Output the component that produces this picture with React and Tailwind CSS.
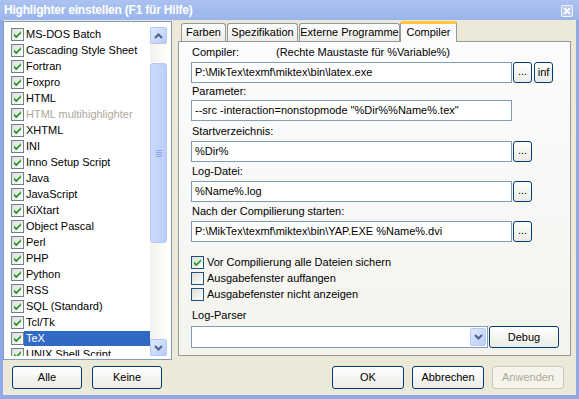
import React from "react";

const languages = [
  "MS-DOS Batch",
  "Cascading Style Sheet",
  "Fortran",
  "Foxpro",
  "HTML",
  "HTML multihighlighter",
  "XHTML",
  "INI",
  "Inno Setup Script",
  "Java",
  "JavaScript",
  "KiXtart",
  "Object Pascal",
  "Perl",
  "PHP",
  "Python",
  "RSS",
  "SQL (Standard)",
  "Tcl/Tk",
  "TeX",
  "UNIX Shell Script",
];

const Check = () => (
  <svg width="11" height="11" viewBox="0 0 11 11">
    <path d="M2 4.5 L4.3 6.8 L9 2.1 L9 4.6 L4.3 9.3 L2 7 Z" fill="#21A121" />
  </svg>
);

const CheckBox = ({ checked, dark }) => (
  <div
    className={`w-[13px] h-[13px] shrink-0 border flex items-center justify-center bg-linear-to-br from-[#DCDCD7] to-white ${
      dark ? "border-[#1C5180]" : "border-[#72818F]"
    }`}
  >
    {checked && <Check />}
  </div>
);

const Chevron = ({ down }) => (
  <svg width="9" height="6" viewBox="0 0 9 6">
    <polyline
      points={down ? "1,1 4.5,4.5 8,1" : "1,5 4.5,1.5 8,5"}
      fill="none"
      stroke="#4D6185"
      strokeWidth="2"
    />
  </svg>
);

const XpButton = ({ children, className = "", disabled }) => (
  <div
    className={`flex items-center justify-center rounded-[3px] border ${
      disabled
        ? "border-[#C9C7BA] bg-[#F5F4EA] text-[#ACA899]"
        : "border-[#003C74] bg-linear-to-b from-white to-[#ECEBE6]"
    } ${className}`}
  >
    {children}
  </div>
);

const Field = ({ value, w = "w-[321px]" }) => (
  <div className={`${w} h-[21px] border border-[#7F9DB9] bg-white flex items-center pl-[3px] whitespace-nowrap overflow-hidden`}>
    {value}
  </div>
);

const Dots = () => <XpButton className="w-[19px] h-[21px] ml-[1px] pb-[3px]">...</XpButton>;

export default function App() {
  return (
    <div className="w-[579px] h-[399px] bg-[#8EA8E8] flex flex-col overflow-hidden font-['Liberation_Sans',Arial,sans-serif] text-[11px] text-black">
      {/* title bar */}
      <div className="relative h-[20px] shrink-0 flex items-center pl-[4px] bg-linear-to-b from-[#ABC2F1] to-[#9BB5EC]">
        <span className="font-bold text-[12px] text-white tracking-[-0.2px]">Highlighter einstellen (F1 für Hilfe)</span>
        <div className="absolute right-[6px] top-[5px] w-[12px] h-[12px] rounded-[2px] border border-white/80 bg-[#B6C6EE] flex items-center justify-center">
          <svg width="8" height="8" viewBox="0 0 8 8">
            <path d="M1 1 L7 7 M7 1 L1 7" stroke="white" strokeWidth="1.8" />
          </svg>
        </div>
      </div>

      {/* body */}
      <div className="flex-1 mx-[3px] mb-[4px] bg-[#ECE9D8] flex flex-col">
        <div className="flex pt-[1px]">
          {/* language list */}
          <div className="w-[169px] h-[339px] border border-[#7F9DB9] bg-white flex pt-[4px] pl-[4px] pr-[4px] pb-[3px]">
            <div className="flex-1 flex flex-col overflow-hidden">
              {languages.map((name) => {
                const sel = name === "TeX";
                const dis = name === "HTML multihighlighter";
                return (
                  <div key={name} className="h-[16px] shrink-0 flex items-center pl-[3px]">
                    <CheckBox checked />
                    <span
                      className={`ml-[0px] h-[15px] flex-1 flex items-center pl-[2px] whitespace-nowrap ${
                        sel ? "bg-[#316AC5] text-white" : dis ? "text-[#ACA899]" : ""
                      }`}
                    >
                      {name}
                    </span>
                  </div>
                );
              })}
            </div>
            {/* scrollbar */}
            <div className="w-[17px] mt-[1px] flex flex-col bg-linear-to-r from-[#F3F1EC] to-[#FEFEFB]">
              <div className="h-[17px] rounded-[2px] border border-[#B4C8F6] bg-linear-to-br from-[#E0E9FD] to-[#BACCF7] flex items-center justify-center">
                <Chevron />
              </div>
              <div className="h-[19px]" />
              <div className="h-[180px] rounded-[3px] border border-[#B4C8F6] bg-linear-to-r from-[#CBDAFC] to-[#BCCFFA] flex flex-col items-center justify-center gap-[1px]">
                <div className="w-[6px] h-[1px] bg-[#8BA7E8]" />
                <div className="w-[6px] h-[1px] bg-[#8BA7E8]" />
                <div className="w-[6px] h-[1px] bg-[#8BA7E8]" />
                <div className="w-[6px] h-[1px] bg-[#8BA7E8]" />
              </div>
              <div className="flex-1" />
              <div className="h-[17px] rounded-[2px] border border-[#B4C8F6] bg-linear-to-br from-[#E0E9FD] to-[#BACCF7] flex items-center justify-center">
                <Chevron down />
              </div>
            </div>
          </div>

          {/* tab control */}
          <div className="ml-[6px] w-[393px] flex flex-col">
            <div className="h-[20px] flex items-end pl-[3px]">
              <div className="w-[45px] h-[18px] border border-b-0 border-[#919B9C] rounded-t-[3px] bg-linear-to-b from-white to-[#ECEBE6] flex items-center justify-center">
                Farben
              </div>
              <div className="ml-[1px] w-[71px] h-[18px] border border-b-0 border-[#919B9C] rounded-t-[3px] bg-linear-to-b from-white to-[#ECEBE6] flex items-center justify-center">
                Spezifikation
              </div>
              <div className="ml-[1px] w-[101px] h-[18px] border border-b-0 border-[#919B9C] rounded-t-[3px] bg-linear-to-b from-white to-[#ECEBE6] flex items-center justify-center">
                Externe Programme
              </div>
              <div className="relative z-10 -mb-[1px] w-[57px] h-[21px] border border-b-0 border-[#919B9C] border-t-[3px] border-t-[#FFC83C] rounded-t-[3px] bg-[#FCFCFE] flex items-center justify-center pb-[1px]">
                Compiler
              </div>
            </div>
            <div className="h-[315px] border border-[#919B9C] bg-linear-to-b from-[#FCFCFE] to-[#F4F3EE] flex flex-col pl-[12px]">
              <div className="mt-[4px] h-[13px] flex items-center pl-[1px]">
                <span className="w-[84px]">Compiler:</span>
                <span>(Rechte Maustaste für %Variable%)</span>
              </div>
              <div className="mt-[3px] flex">
                <Field value="P:\MikTex\texmf\miktex\bin\latex.exe" />
                <Dots />
                <XpButton className="w-[19px] h-[21px] ml-[2px]">inf</XpButton>
              </div>

              <div className="mt-[2px] h-[13px] flex items-center pl-[1px]">Parameter:</div>
              <div className="mt-[2px] flex">
                <Field value={'--src -interaction=nonstopmode "%Dir%%Name%.tex"'} />
              </div>

              <div className="mt-[4px] h-[13px] flex items-center pl-[1px]">Startverzeichnis:</div>
              <div className="mt-[3px] flex">
                <Field value="%Dir%" />
                <Dots />
              </div>

              <div className="mt-[3px] h-[13px] flex items-center pl-[1px]">Log-Datei:</div>
              <div className="mt-[3px] flex">
                <Field value="%Name%.log" />
                <Dots />
              </div>

              <div className="mt-[3px] h-[13px] flex items-center pl-[1px]">Nach der Compilierung starten:</div>
              <div className="mt-[3px] flex">
                <Field value="P:\MikTex\texmf\miktex\bin\YAP.EXE %Name%.dvi" />
                <Dots />
              </div>

              <div className="mt-[12px] flex flex-col">
                <div className="h-[16px] flex items-center">
                  <CheckBox checked dark />
                  <span className="ml-[3px]">Vor Compilierung alle Dateien sichern</span>
                </div>
                <div className="h-[16px] flex items-center">
                  <CheckBox dark />
                  <span className="ml-[3px]">Ausgabefenster auffangen</span>
                </div>
                <div className="h-[16px] flex items-center">
                  <CheckBox dark />
                  <span className="ml-[3px]">Ausgabefenster nicht anzeigen</span>
                </div>
              </div>

              <div className="mt-[7px] h-[13px] flex items-center pl-[1px]">Log-Parser</div>
              <div className="mt-[4px] flex">
                <div className="w-[297px] h-[22px] border border-[#7F9DB9] bg-white flex justify-end p-[1px]">
                  <div className="w-[16px] h-full rounded-[2px] border border-[#B4C8F6] bg-linear-to-br from-[#E0E9FD] to-[#BACCF7] flex items-center justify-center">
                    <Chevron down />
                  </div>
                </div>
                <XpButton className="w-[70px] h-[22px] ml-[1px]">Debug</XpButton>
              </div>
            </div>
          </div>
        </div>

        {/* bottom buttons */}
        <div className="mt-[6px] flex pl-[9px] pr-[12px]">
          <XpButton className="w-[70px] h-[23px]">Alle</XpButton>
          <XpButton className="w-[70px] h-[23px] ml-[10px]">Keine</XpButton>
          <div className="flex-1" />
          <XpButton className="w-[72px] h-[23px]">OK</XpButton>
          <XpButton className="w-[72px] h-[23px] ml-[8px]">Abbrechen</XpButton>
          <XpButton disabled className="w-[72px] h-[23px] ml-[8px]">Anwenden</XpButton>
        </div>
      </div>
    </div>
  );
}
